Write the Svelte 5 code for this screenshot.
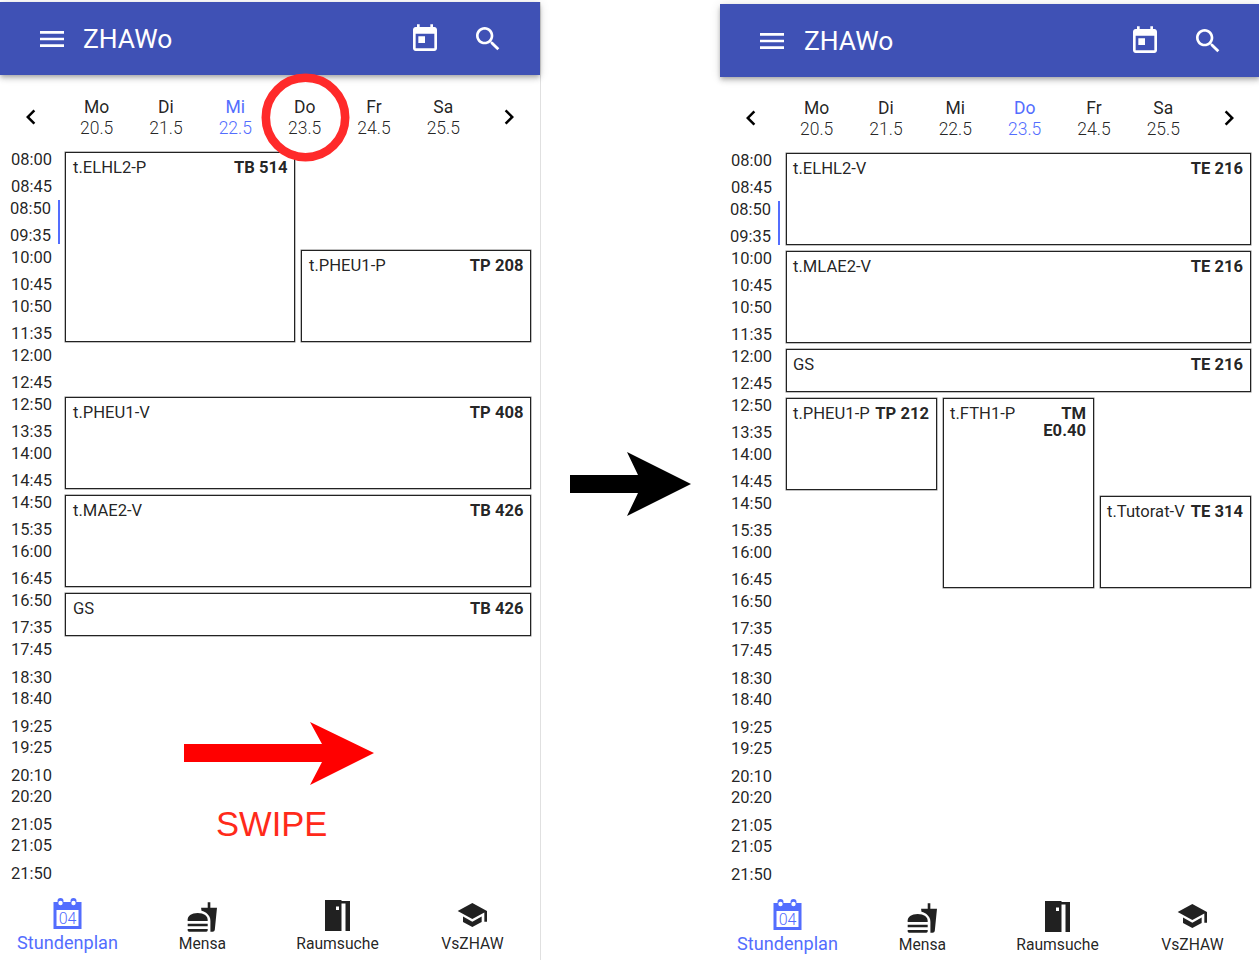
<script>
  const slots = [
    ['08:00','08:45'],['08:50','09:35'],['10:00','10:45'],['10:50','11:35'],['12:00','12:45'],
    ['12:50','13:35'],['14:00','14:45'],['14:50','15:35'],['16:00','16:45'],['16:50','17:35'],
    ['17:45','18:30'],['18:40','19:25'],['19:25','20:10'],['20:20','21:05'],['21:05','21:50']
  ];
  const days = [['Mo','20.5'],['Di','21.5'],['Mi','22.5'],['Do','23.5'],['Fr','24.5'],['Sa','25.5']];

  const left = {
    cls: 'first', cols: 2, activeDay: 'Mi',
    events: [
      { name: 't.ELHL2-P', room: 'TB 514', col: '1', row: '1 / span 4' },
      { name: 't.PHEU1-P', room: 'TP 208', col: '2', row: '3 / span 2' },
      { name: 't.PHEU1-V', room: 'TP 408', col: '1 / span 2', row: '6 / span 2' },
      { name: 't.MAE2-V', room: 'TB 426', col: '1 / span 2', row: '8 / span 2' },
      { name: 'GS', room: 'TB 426', col: '1 / span 2', row: '10' }
    ]
  };
  const right = {
    cls: 'second', cols: 3, activeDay: 'Do',
    events: [
      { name: 't.ELHL2-V', room: 'TE 216', col: '1 / span 3', row: '1 / span 2' },
      { name: 't.MLAE2-V', room: 'TE 216', col: '1 / span 3', row: '3 / span 2' },
      { name: 'GS', room: 'TE 216', col: '1 / span 3', row: '5' },
      { name: 't.PHEU1-P', room: 'TP 212', col: '1', row: '6 / span 2' },
      { name: 't.FTH1-P', room: 'TM E0.40', col: '2', row: '6 / span 4' },
      { name: 't.Tutorat-V', room: 'TE 314', col: '3', row: '8 / span 2' }
    ]
  };
</script>

{#snippet phone(p)}
  <section class="phone {p.cls}">
    <header class="bar">
      <svg class="ic menu" viewBox="0 0 24 24"><path d="M3 18h18v-2H3v2zm0-5h18v-2H3v2zm0-7v2h18V6H3z"/></svg>
      <span class="title">ZHAWo</span>
      <svg class="ic today" viewBox="0 0 24 24"><path d="M19 3h-1V1h-2v2H8V1H6v2H5c-1.11 0-1.99.9-1.99 2L3 19c0 1.1.89 2 2 2h14c1.1 0 2-.9 2-2V5c0-1.1-.9-2-2-2zm0 16H5V8h14v11zM7 10h5v5H7z"/></svg>
      <svg class="ic search" viewBox="0 0 24 24"><path d="M15.5 14h-.79l-.28-.27C15.41 12.59 16 11.11 16 9.5 16 5.91 13.09 3 9.5 3S3 5.91 3 9.5 5.91 16 9.5 16c1.61 0 3.09-.59 4.23-1.57l.27.28v.79l5 4.99L20.49 19l-4.99-5zm-6 0C7.01 14 5 11.99 5 9.5S7.01 5 9.5 5 14 7.01 14 9.5 11.99 14 9.5 14z"/></svg>
    </header>

    <div class="days">
      <div class="arrow"><svg viewBox="0 0 24 24"><path d="M15.41 7.41L14 6l-6 6 6 6 1.41-1.41L10.83 12z"/></svg></div>
      {#each days as d}
        <div class="day" class:current={d[0] === p.activeDay}>
          <span class="dn">{d[0]}</span>
          <span class="dd">{d[1]}</span>
        </div>
      {/each}
      <div class="arrow"><svg viewBox="0 0 24 24"><path d="M10 6L8.59 7.41 13.17 12l-4.58 4.59L10 18l6-6z"/></svg></div>
    </div>

    <div class="table">
      <div class="times">
        {#each slots as s, i}
          <div class="slot" class:now={i === 1}><span>{s[0]}</span><span>{s[1]}</span></div>
        {/each}
      </div>
      <div class="grid" class:three={p.cols === 3}>
        {#each p.events as e}
          <div class="event" style="grid-column:{e.col};grid-row:{e.row}">
            <span class="name">{e.name}</span>
            <b class="room">{e.room}</b>
          </div>
        {/each}
      </div>
    </div>

    <nav class="tabs">
      <div class="tab active">
        <svg class="tabicon" viewBox="0.5 0 32 32">
          <path class="cal" fill-rule="evenodd" d="M2 2h28v27H2zM5 10v16h22V10z"/>
          <circle class="cal" cx="9" cy="1" r="3"/>
          <circle class="cal" cx="22" cy="1" r="3"/>
          <circle class="hole" cx="9" cy="3" r="2.2"/>
          <circle class="hole" cx="22" cy="3" r="2.2"/>
          <text x="16" y="23.5" text-anchor="middle" class="num">04</text>
        </svg>
        <span class="lab big">Stundenplan</span>
      </div>
      <div class="tab">
        <svg class="tabicon" viewBox="0.5 -0.75 24 24"><path d="M18.06 22.99h1.66c.84 0 1.53-.64 1.63-1.46L23 5.05h-5V1h-1.97v4.05h-4.97l.3 2.34c1.71.47 3.31 1.32 4.27 2.26 1.44 1.42 2.43 2.89 2.43 5.29v8.05zM1 21.99V21h15.03v.99c0 .55-.45 1-1.01 1H2.01c-.56 0-1.01-.45-1.01-1zm15.03-7c.5-4-3.03-6-7.52-6-4.49 0-8.03 2-7.51 6h15.03zM1.02 17h15v2h-15z"/></svg>
        <span class="lab">Mensa</span>
      </div>
      <div class="tab">
        <svg class="tabicon" viewBox="0 0 32 32"><path fill-rule="evenodd" d="M3 0h16.5v1h8.500v30h-4.500V3.500h-4V31H3zM14 6.500v3.500h3V6.500z"/></svg>
        <span class="lab">Raumsuche</span>
      </div>
      <div class="tab">
        <svg class="tabicon" viewBox="0.5 0.75 24 24"><path d="M5 13.18v4L12 21l7-3.82v-4L12 17l-7-3.82zM12 3L1 9l11 6 9-4.91V17h2V9L12 3z"/></svg>
        <span class="lab">VsZHAW</span>
      </div>
    </nav>
  </section>
{/snippet}

<main class="stage">
  {@render phone(left)}
  {@render phone(right)}

  <svg class="overlay" viewBox="0 0 1259 966" aria-hidden="true">
    <circle cx="305.500" cy="117.500" r="39.700" fill="none" stroke="#ff2a2a" stroke-width="8.600"/>
    <polygon fill="#ff0000" points="184,744 322,744 310,722 374,753 310,785 322,762 184,762"/>
    <polygon fill="#000000" points="570,475 638,475 627,452 691,484 627,516 638,493 570,493"/>
  </svg>
  <span class="swipe">SWIPE</span>
</main>

<style>
  :global(body) { margin: 0; background: #fff; }
  .stage {
    position: relative;
    display: flex;
    align-items: flex-start;
    gap: 179px;
    width: 1259px;
    height: 966px;
    overflow: hidden;
    font-family: Roboto, "Liberation Sans", sans-serif;
    color: rgba(0, 0, 0, 0.87);
  }
  .phone {
    flex: 0 0 541px;
    box-sizing: border-box;
    display: flex;
    flex-direction: column;
    border-right: 1px solid transparent;
  }
  .first { margin-top: 2px; height: 958px; border-right-color: #e0e0e0; }
  .second { margin-top: 4px; height: 957px; }

  .bar {
    height: 73px;
    flex: none;
    display: flex;
    align-items: center;
    background: #3f51b5;
    color: #fff;
    box-shadow: 0 2px 4px -1px rgba(0,0,0,.2), 0 4px 5px rgba(0,0,0,.14), 0 1px 10px rgba(0,0,0,.12);
  }
  .ic { width: 32px; height: 32px; fill: #fff; flex: none; }
  .menu { margin-left: 36px; }
  .title { margin-left: 15px; font-size: 26.400px; line-height: 32px; padding-top: 1px; flex: 1; }
  .second .title { margin-left: 16px; padding-top: 0; }
  .search { margin-left: 31px; margin-right: 36px; }

  .days { display: flex; align-items: center; padding-top: 22px; flex: none; }
  .second .days { padding-top: 21px; }
  .arrow { flex: 0 0 62px; display: flex; justify-content: center; align-self: flex-start; height: 40px; align-items: center; }
  .arrow svg { width: 30px; height: 30px; }
  .day { flex: 1; display: flex; flex-direction: column; align-items: center; line-height: 21px; font-size: 17.500px; }
  .dd { font-weight: 300; font-size: 17.500px; }
  .current { color: #536dfe; }

  .table { display: flex; align-items: flex-start; margin-top: 12px; flex: none; }
  .times { flex: 0 0 60px; display: flex; flex-direction: column; gap: 5px; font-size: 16.500px; line-height: 16px; }
  .slot {
    box-sizing: border-box;
    height: 44px;
    display: flex;
    flex-direction: column;
    justify-content: space-between;
    align-items: flex-end;
    padding: 1px 8px 0 0;
  }
  .slot:nth-child(n+11) { height: 45px; margin-bottom: -1px; }
  .slot.now { border-right: 2px solid #536dfe; padding-right: 7px; }

  .grid {
    margin: 1px 9px 0 5px;
    flex: 1;
    min-width: 0;
    display: grid;
    grid-template-columns: repeat(2, 1fr);
    grid-template-rows: repeat(15, 49px);
    column-gap: 6px;
  }
  .grid.three { grid-template-columns: repeat(3, 1fr); column-gap: 5.500px; margin-left: 5.500px; }
  .event {
    box-sizing: border-box;
    margin-bottom: 6px;
    padding: 6px 6.500px 0 7px;
    border: 1px solid #222;
    box-shadow: 0 0 0 0.500px rgba(0,0,0,.5);
    display: flex;
    justify-content: space-between;
    gap: 2px;
    font-size: 16.600px;
    line-height: 17px;
  }
  .three .event { padding-left: 6.500px; padding-right: 7px; }
  .name { white-space: nowrap; flex: none; }
  .room { font-weight: 700; text-align: right; }

  .tabs { margin-top: auto; display: grid; grid-template-columns: repeat(4, 1fr); height: 60px; flex: none; }
  .tab { display: flex; flex-direction: column; align-items: center; }
  .tabicon { width: 32px; height: 32px; flex: none; overflow: visible; fill: rgba(0,0,0,.87); }
  .lab { font-size: 15.700px; line-height: 21px; margin-top: 1px; white-space: nowrap; }
  .lab.big { font-size: 18.100px; margin-top: 0; }
  .active .lab { color: #536dfe; }
  .active .tabicon { fill: #536dfe; }
  .hole { fill: #fff; }
  .num { font: 300 16px Roboto, sans-serif; fill: #536dfe; }

  .overlay { position: absolute; left: 0; top: 0; width: 1259px; height: 966px; pointer-events: none; }
  .swipe {
    position: absolute;
    left: 216px;
    top: 804px;
    font: 34.600px/40px "Liberation Sans", Arial, sans-serif;
    color: #ff2a1a;
  }
</style>
